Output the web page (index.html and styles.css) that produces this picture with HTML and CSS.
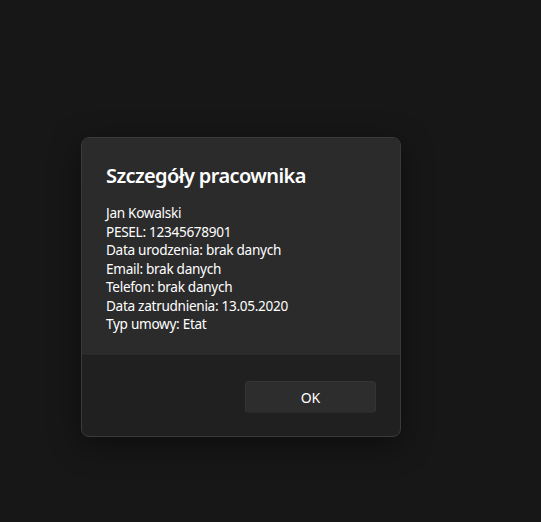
FILE: index.html
```html
<!DOCTYPE html>
<html lang="pl">
<head>
<meta charset="utf-8">
<link rel="stylesheet" href="styles.css">
</head>
<body>
<div class="stage">
  <div class="dialog">
    <div class="content">
      <h1 class="title">Szczegóły pracownika</h1>
      <div class="body">
        <div>Jan Kowalski</div>
        <div>PESEL: 12345678901</div>
        <div>Data urodzenia: brak danych</div>
        <div>Email: brak danych</div>
        <div>Telefon: brak danych</div>
        <div>Data zatrudnienia: 13.05.2020</div>
        <div>Typ umowy: Etat</div>
      </div>
    </div>
    <div class="footer">
      <span class="spacer"></span>
      <button class="btn">OK</button>
    </div>
  </div>
</div>
</body>
</html>
```

FILE: styles.css
```css
html, body {
  margin: 0;
  padding: 0;
  background: #171717;
  width: 541px;
  height: 522px;
  overflow: hidden;
}
.stage {
  padding: 137px 0 0 81px;
}
.dialog {
  width: 318px;
  height: 298px;
  border: 1px solid #3a3a3a;
  border-radius: 8px;
  background: #202020;
  overflow: hidden;
  display: flex;
  flex-direction: column;
  box-shadow: 0 8px 32px rgba(0,0,0,0.45);
  font-family: "Noto Sans", "Open Sans", sans-serif;
  color: #ffffff;
}
.content {
  flex: 1;
  background: #2b2b2b;
  padding: 24px 24px 0 24px;
  border-bottom: 1px solid #1d1d1d;
}
.title {
  margin: 0 0 14px 0;
  font-size: 20px;
  line-height: 28px;
  font-weight: 600;
  letter-spacing: -0.6px;
}
.body {
  font-size: 13.6px;
  line-height: 18.5px;
  letter-spacing: -0.3px;
}
.footer {
  height: 80px;
  box-sizing: border-box;
  padding: 25px 24px 23px 24px;
  display: grid;
  grid-template-columns: 1fr 1fr;
  gap: 8px;
  align-items: start;
}
.btn {
  height: 32px;
  border: 1px solid #343434;
  border-bottom-color: #2a2a2a;
  border-radius: 4px;
  background: #2d2d2d;
  color: #ffffff;
  font-family: "Noto Sans", "Open Sans", sans-serif;
  font-size: 14px;
  padding: 0;
}
```
